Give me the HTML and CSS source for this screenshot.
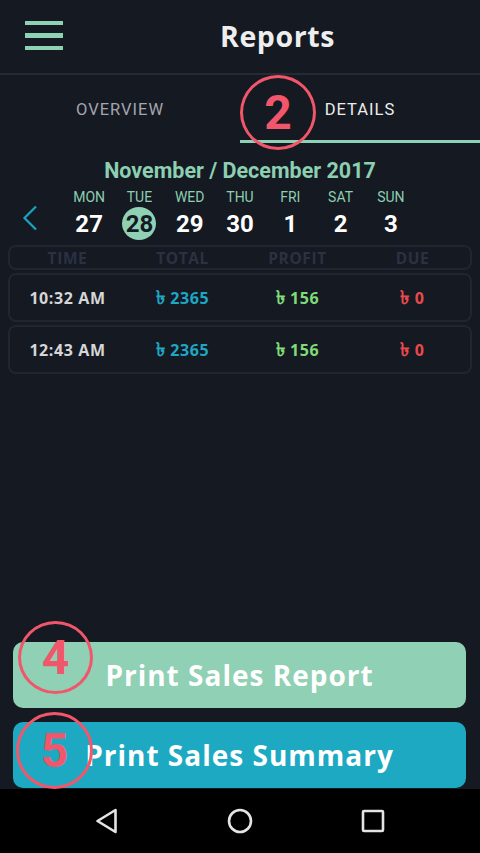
FILE: index.html
```html
<!DOCTYPE html>
<html>
<head>
<meta charset="utf-8">
<link rel="stylesheet" href="styles.css">
</head>
<body>
<div class="screen">
  <header class="appbar">
    <div class="menu"><span></span><span></span><span></span></div>
    <h1 class="title">Reports</h1>
  </header>
  <nav class="tabs">
    <div class="tab">OVERVIEW</div>
    <div class="tab active">DETAILS</div>
  </nav>
  <section class="week">
    <div class="month">November / December 2017</div>
    <div class="week-row">
      <div class="arrow">
        <svg width="16" height="26" viewBox="0 0 16 26"><path d="M14 1.5 L2.5 13 L14 24.5" fill="none" stroke="#1ba4c2" stroke-width="2.2"/></svg>
      </div>
      <div class="days">
        <div class="day"><span class="dname">MON</span><span class="dnum">27</span></div>
        <div class="day sel"><span class="dname">TUE</span><span class="dnum">28</span></div>
        <div class="day"><span class="dname">WED</span><span class="dnum">29</span></div>
        <div class="day"><span class="dname">THU</span><span class="dnum">30</span></div>
        <div class="day"><span class="dname">FRI</span><span class="dnum">1</span></div>
        <div class="day"><span class="dname">SAT</span><span class="dnum">2</span></div>
        <div class="day"><span class="dname">SUN</span><span class="dnum">3</span></div>
      </div>
      <div class="arrow"></div>
    </div>
  </section>
  <section class="table">
    <div class="trow thead"><span>TIME</span><span>TOTAL</span><span>PROFIT</span><span>DUE</span></div>
    <div class="trow"><span class="c-time">10:32 AM</span><span class="c-total"><b class="tk">৳</b> 2365</span><span class="c-profit"><b class="tk">৳</b> 156</span><span class="c-due"><b class="tk">৳</b> 0</span></div>
    <div class="trow"><span class="c-time">12:43 AM</span><span class="c-total"><b class="tk">৳</b> 2365</span><span class="c-profit"><b class="tk">৳</b> 156</span><span class="c-due"><b class="tk">৳</b> 0</span></div>
  </section>
  <div class="spacer"></div>
  <div class="actions">
    <button class="btn btn-report">Print Sales Report</button>
    <button class="btn btn-summary">Print Sales Summary</button>
  </div>
  <div class="navbar">
    <svg width="24" height="26" viewBox="0 0 24 26"><path d="M20.5 2 L2.5 13 L20.5 24 Z" fill="none" stroke="#e4e4e4" stroke-width="2.6" stroke-linejoin="round"/></svg>
    <svg width="26" height="26" viewBox="0 0 26 26"><circle cx="13" cy="13" r="11" fill="none" stroke="#e4e4e4" stroke-width="2.6"/></svg>
    <svg width="24" height="24" viewBox="0 0 24 24"><rect x="2" y="2" width="20" height="20" rx="1" fill="none" stroke="#e4e4e4" stroke-width="2.6"/></svg>
  </div>
  <div class="mark mark-2">2</div>
  <div class="mark mark-4">4</div>
  <div class="mark mark-5">5</div>
</div>
</body>
</html>
```
FILE: styles.css
```css
* { box-sizing: border-box; margin: 0; padding: 0; }
html, body { width: 480px; height: 853px; overflow: hidden; background: #151922; }
body { font-family: Roboto, "Noto Sans", sans-serif; }
.screen { position: relative; width: 480px; height: 853px; display: flex; flex-direction: column; }

.appbar { height: 75px; border-bottom: 2px solid #262a33; display: flex; align-items: center; padding-left: 25px; }
.menu { width: 38px; display: flex; flex-direction: column; gap: 8px; margin-top: -2px; }
.menu span { display: block; height: 4.5px; background: #8fd1b4; }
.title { flex: 1; text-align: center; padding-left: 12px; font-family: "Open Sans", sans-serif; font-weight: 700; font-size: 28.5px; letter-spacing: 0.6px; color: #eeeeee; margin-top: -2px; }

.tabs { height: 68px; display: flex; }
.tab { flex: 1; display: flex; align-items: center; justify-content: center; font-size: 16.5px; letter-spacing: 1px; color: #a3a6ad; border-bottom: 3px solid transparent; padding-top: 4px; }
.tab.active { color: #ececec; border-bottom-color: #8fd1b4; }

.week { padding-top: 16px; }
.month { text-align: center; font-size: 21.5px; font-weight: 700; color: #8ccfb1; line-height: 24px; }
.week-row { display: flex; margin-top: 6px; }
.arrow { width: 64px; display: flex; align-items: flex-end; padding-left: 22px; padding-bottom: 9px; }
.days { flex: 1; display: grid; grid-template-columns: repeat(7, 1fr); }
.day { display: flex; flex-direction: column; align-items: center; }
.dname { font-size: 14px; color: #8ccfb1; line-height: 16px; }
.dnum { margin-top: 2px; width: 34px; height: 33px; border-radius: 50%; display: flex; align-items: center; justify-content: center; font-size: 24px; font-weight: 700; color: #ffffff; }
.day.sel .dnum { background: #8fd1b4; color: #151922; }

.table { padding: 5px 8px 0 8px; display: flex; flex-direction: column; gap: 3px; }
.trow { display: grid; grid-template-columns: repeat(4, 1fr); align-items: center; height: 49px; border: 2px solid #20252f; border-radius: 8px; font-family: "Open Sans", sans-serif; font-weight: 700; font-size: 16px; letter-spacing: 0.6px; }
.trow span { text-align: center; }
.tk { font-weight: 700; font-size: 19px; line-height: 1; }
.thead { height: 25px; color: #2b3142; font-size: 15.5px; letter-spacing: 0.6px; }
.c-time { color: #d6d6d6; }
.c-total { color: #1ea7c4; }
.c-profit { color: #80db79; }
.c-due { color: #e8494e; }

.spacer { flex: 1; }
.actions { display: flex; flex-direction: column; gap: 14px; padding: 0 14px 0 13px; }
.btn { height: 66px; border: none; border-radius: 10px; font-family: "Open Sans", sans-serif; font-weight: 700; font-size: 28px; letter-spacing: 1px; color: #ffffff; }
.btn-report { background: #90d0b4; }
.btn-summary { background: #1ea9c3; }

.navbar { margin-top: 1px; height: 64px; background: #000000; display: flex; align-items: center; justify-content: space-between; padding: 0 95px; }

.mark { position: absolute; border: 3.5px solid #f2566b; border-radius: 50%; display: flex; align-items: center; justify-content: center; color: #f2566b; font-family: Roboto, sans-serif; font-weight: 700; font-size: 48px; }
.mark-2 { left: 240px; top: 75px; width: 76px; height: 75px; }
.mark-4 { left: 18px; top: 621px; width: 75px; height: 73px; }
.mark-5 { left: 16px; top: 712px; width: 77px; height: 77px; }
```
